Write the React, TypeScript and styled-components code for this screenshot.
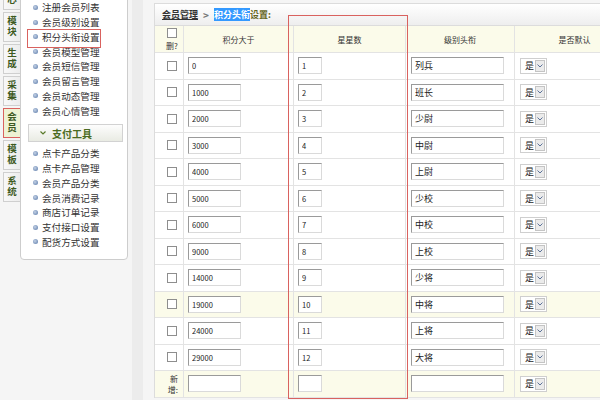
import React from "react"
import styled, { createGlobalStyle } from "styled-components"

const GlobalStyle = createGlobalStyle`
  html, body {
    margin: 0;
    padding: 0;
    background: #f5f5f5;
    overflow: hidden;
  }
  body {
    font-family: "Noto Sans CJK SC", "Noto Sans", sans-serif;
    color: #333;
  }
`

const Page = styled.div`
  display: flex;
  width: 600px;
  height: 400px;
  overflow: hidden;
  background: #f5f5f5;
`

// left vertical tabs
const TabColumn = styled.div`
  display: flex;
  flex-direction: column;
  gap: 2px;
  width: 20px;
  flex-shrink: 0;
  margin-top: -20px;
  padding-left: 3px;
  box-sizing: border-box;
`

const Tab = styled.div<{ $active?: boolean }>`
  height: 30px;
  box-sizing: border-box;
  display: flex;
  align-items: center;
  justify-content: center;
  font-size: 9.5px;
  font-weight: 700;
  color: #3d5a1e;
  background: ${(p) => (p.$active ? "#eef3d4" : "linear-gradient(90deg, #f8f8f8, #ececec)")};
  border: 1px solid ${(p) => (p.$active ? "#d9625f" : "#cfcfcf")};
  border-right: ${(p) => (p.$active ? "1px solid #d9625f" : "none")};
  margin-right: ${(p) => (p.$active ? "-1px" : "0")};
`

const TabLabel = styled.span`
  writing-mode: vertical-rl;
  text-orientation: upright;
  letter-spacing: 1.5px;
  line-height: 12px;
`

// menu panel
const Sidebar = styled.div`
  position: relative;
  width: 108px;
  height: 261px;
  flex-shrink: 0;
  margin-top: -1px;
  box-sizing: border-box;
  background: #fff;
  border: 1px solid #cdcdcd;
  border-radius: 0 0 4px 4px;
  padding: 0 4px 0 7px;
`

const MenuList = styled.ul`
  list-style: none;
  margin: 0;
  padding: 0 0 0 5px;
`

const MenuItem = styled.li`
  display: flex;
  align-items: center;
  gap: 4px;
  height: 14.75px;
  font-size: 9.6px;
  color: #333;
  white-space: nowrap;
`

const Dot = styled.span`
  width: 5px;
  height: 5px;
  flex-shrink: 0;
  border-radius: 50%;
  background: radial-gradient(circle at 40% 40%, #c4d2e6, #5676a6);
`

const SectionHeader = styled.div`
  display: flex;
  align-items: center;
  gap: 6px;
  height: 18px;
  margin: 6px 0 4px;
  padding-left: 11px;
  box-sizing: border-box;
  border: 1px solid #d2d2d2;
  background: linear-gradient(#fdfdfd, #e9ebe3);
  font-size: 10px;
  font-weight: 700;
  color: #4b6b22;
`

const Highlight = styled.div`
  position: absolute;
  border: 1px solid #d9625f;
  box-sizing: border-box;
  pointer-events: none;
`

const Splitter = styled.div`
  width: 11px;
  flex-shrink: 0;
  margin-left: 4px;
  background: #ececec;
`

// main content
const Main = styled.div`
  position: relative;
  flex: 1;
  min-width: 0;
  overflow: hidden;
  padding: 3px 0 0 11px;
`

const HeaderBar = styled.div`
  display: flex;
  align-items: center;
  height: 23px;
  box-sizing: border-box;
  padding-left: 7px;
  border-top: 1px solid #dcdcdc;
  border-bottom: 1px solid #dcdcdc;
  border-left: 1px solid #dcdcdc;
  background: linear-gradient(#ffffff, #eeeeee);
  font-size: 9px;
  font-weight: 700;
  white-space: nowrap;
`

const Crumb = styled.span`
  color: #333;
  text-decoration: underline;
`

const Arrow = styled.span`
  margin: 0 5px;
  color: #777;
  font-size: 10px;
`

const Selected = styled.span`
  background: #3399ff;
  color: #fff;
`

const Olive = styled.span`
  color: #66661e;
`

const Grid = styled.div`
  width: 480px;
  border-left: 1px solid #dcdcdc;
`

const Row = styled.div<{ $head?: boolean; $cream?: boolean }>`
  display: grid;
  grid-template-columns: 29px 110px 112px 109px 120px;
  height: ${(p) => (p.$head ? "27px" : "26.5px")};
  box-sizing: border-box;
  border-bottom: 1px solid #e3e3e3;
  background: ${(p) => (p.$head || p.$cream ? "#fbfbea" : "#fff")};
`

const Cell = styled.div<{ $center?: boolean; $pad?: number }>`
  display: flex;
  align-items: center;
  justify-content: ${(p) => (p.$center ? "center" : "flex-start")};
  padding-left: ${(p) => p.$pad ?? 0}px;
  box-sizing: border-box;
  border-right: 1px solid #e3e3e3;
  min-width: 0;
  font-size: 8px;
  color: #333;
`

const CheckCell = styled(Cell)`
  flex-direction: column;
  gap: 2px;
`

const NewLabel = styled(Cell)`
  flex-direction: column;
  align-items: flex-end;
  justify-content: center;
  padding-right: 5px;
  line-height: 11px;
  font-size: 8px;
`

const Check = styled.input`
  appearance: none;
  width: 10px;
  height: 10px;
  margin: 0;
  border: 1px solid #8e8e8e;
  background: #fff;
  box-sizing: border-box;
`

const TextBox = styled.input<{ $w: number; $cjk?: boolean }>`
  width: ${(p) => p.$w}px;
  height: 17px;
  box-sizing: border-box;
  margin: 0;
  padding: 0 3px;
  border: 1px solid;
  border-color: #9a9a9a #dadada #dadada #9a9a9a;
  background: #fff;
  font-family: "Noto Sans CJK SC", sans-serif;
  font-size: ${(p) => (p.$cjk ? "9px" : "7.5px")};
  color: #222;
  outline: none;
`

const Select = styled.div`
  display: flex;
  align-items: center;
  width: 27px;
  height: 16px;
  box-sizing: border-box;
  padding: 0 1px 0 4px;
  border: 1px solid #cfcfcf;
  background: #fff;
  font-size: 9px;
  color: #222;
`

const SelectButton = styled.span`
  display: flex;
  align-items: center;
  justify-content: center;
  width: 10px;
  height: 12px;
  margin-left: auto;
  box-sizing: border-box;
  border: 1px solid #c4c4c4;
  background: #ebebeb;
`

const ColumnMark = styled(Highlight)`
  left: 145px;
  top: 15px;
  width: 120px;
  height: 384px;
`

const MenuMark = styled(Highlight)`
  left: 6px;
  top: 29px;
  width: 74px;
  height: 19px;
`

const tabs = ["核心", "模块", "生成", "采集", "会员", "模板", "系统"]

const memberMenu = [
  "注册会员列表",
  "会员级别设置",
  "积分头衔设置",
  "会员模型管理",
  "会员短信管理",
  "会员留言管理",
  "会员动态管理",
  "会员心情管理",
]

const payMenu = [
  "点卡产品分类",
  "点卡产品管理",
  "会员产品分类",
  "会员消费记录",
  "商店订单记录",
  "支付接口设置",
  "配货方式设置",
]

const ranks: [string, string, string][] = [
  ["0", "1", "列兵"],
  ["1000", "2", "班长"],
  ["2000", "3", "少尉"],
  ["3000", "4", "中尉"],
  ["4000", "5", "上尉"],
  ["5000", "6", "少校"],
  ["6000", "7", "中校"],
  ["9000", "8", "上校"],
  ["14000", "9", "少将"],
  ["19000", "10", "中将"],
  ["24000", "11", "上将"],
  ["29000", "12", "大将"],
]

const YesSelect = () => (
  <Select>
    是
    <SelectButton>
      <svg width="6" height="4" viewBox="0 0 6 4">
        <polyline points="0.5,0.5 3,3 5.5,0.5" fill="none" stroke="#5d7399" strokeWidth="1" />
      </svg>
    </SelectButton>
  </Select>
)

const App: React.FC = () => {
  return (
    <>
      <GlobalStyle />
      <Page>
        <TabColumn>
          {tabs.map((t) => (
            <Tab key={t} $active={t === "会员"}>
              <TabLabel>{t}</TabLabel>
            </Tab>
          ))}
        </TabColumn>

        <Sidebar>
          <MenuList>
            {memberMenu.map((m) => (
              <MenuItem key={m}>
                <Dot />
                {m}
              </MenuItem>
            ))}
          </MenuList>
          <SectionHeader>
            <svg width="6" height="4" viewBox="0 0 6 4">
              <polyline points="0.5,0.5 3,3 5.5,0.5" fill="none" stroke="#5a7a2a" strokeWidth="1.2" />
            </svg>
            支付工具
          </SectionHeader>
          <MenuList>
            {payMenu.map((m) => (
              <MenuItem key={m}>
                <Dot />
                {m}
              </MenuItem>
            ))}
          </MenuList>
          <MenuMark />
        </Sidebar>

        <Splitter />

        <Main>
          <HeaderBar>
            <Crumb>会员管理</Crumb>
            <Arrow>&gt;</Arrow>
            <Olive>
              <Selected>积分头衔</Selected>设置:
            </Olive>
          </HeaderBar>

          <Grid>
            <Row $head>
              <CheckCell $center $pad={6}>
                <Check type="checkbox" />
                <span>删?</span>
              </CheckCell>
              <Cell $center>积分大于</Cell>
              <Cell $center>星星数</Cell>
              <Cell $center>级别头衔</Cell>
              <Cell $center>是否默认</Cell>
            </Row>

            {ranks.map(([score, stars, title], i) => (
              <Row key={score} $cream={i === 9}>
                <Cell $center $pad={6}>
                  <Check type="checkbox" />
                </Cell>
                <Cell $pad={4}>
                  <TextBox $w={53} defaultValue={score} />
                </Cell>
                <Cell $pad={4}>
                  <TextBox $w={24} defaultValue={stars} />
                </Cell>
                <Cell $pad={5}>
                  <TextBox $w={93} $cjk defaultValue={title} />
                </Cell>
                <Cell $pad={5}>
                  <YesSelect />
                </Cell>
              </Row>
            ))}

            <Row $cream>
              <NewLabel>
                <span>新</span>
                <span>增:</span>
              </NewLabel>
              <Cell $pad={4}>
                <TextBox $w={53} />
              </Cell>
              <Cell $pad={4}>
                <TextBox $w={24} />
              </Cell>
              <Cell $pad={5}>
                <TextBox $w={93} $cjk />
              </Cell>
              <Cell $pad={5}>
                <YesSelect />
              </Cell>
            </Row>
          </Grid>

          <ColumnMark />
        </Main>
      </Page>
    </>
  )
}

export default App
